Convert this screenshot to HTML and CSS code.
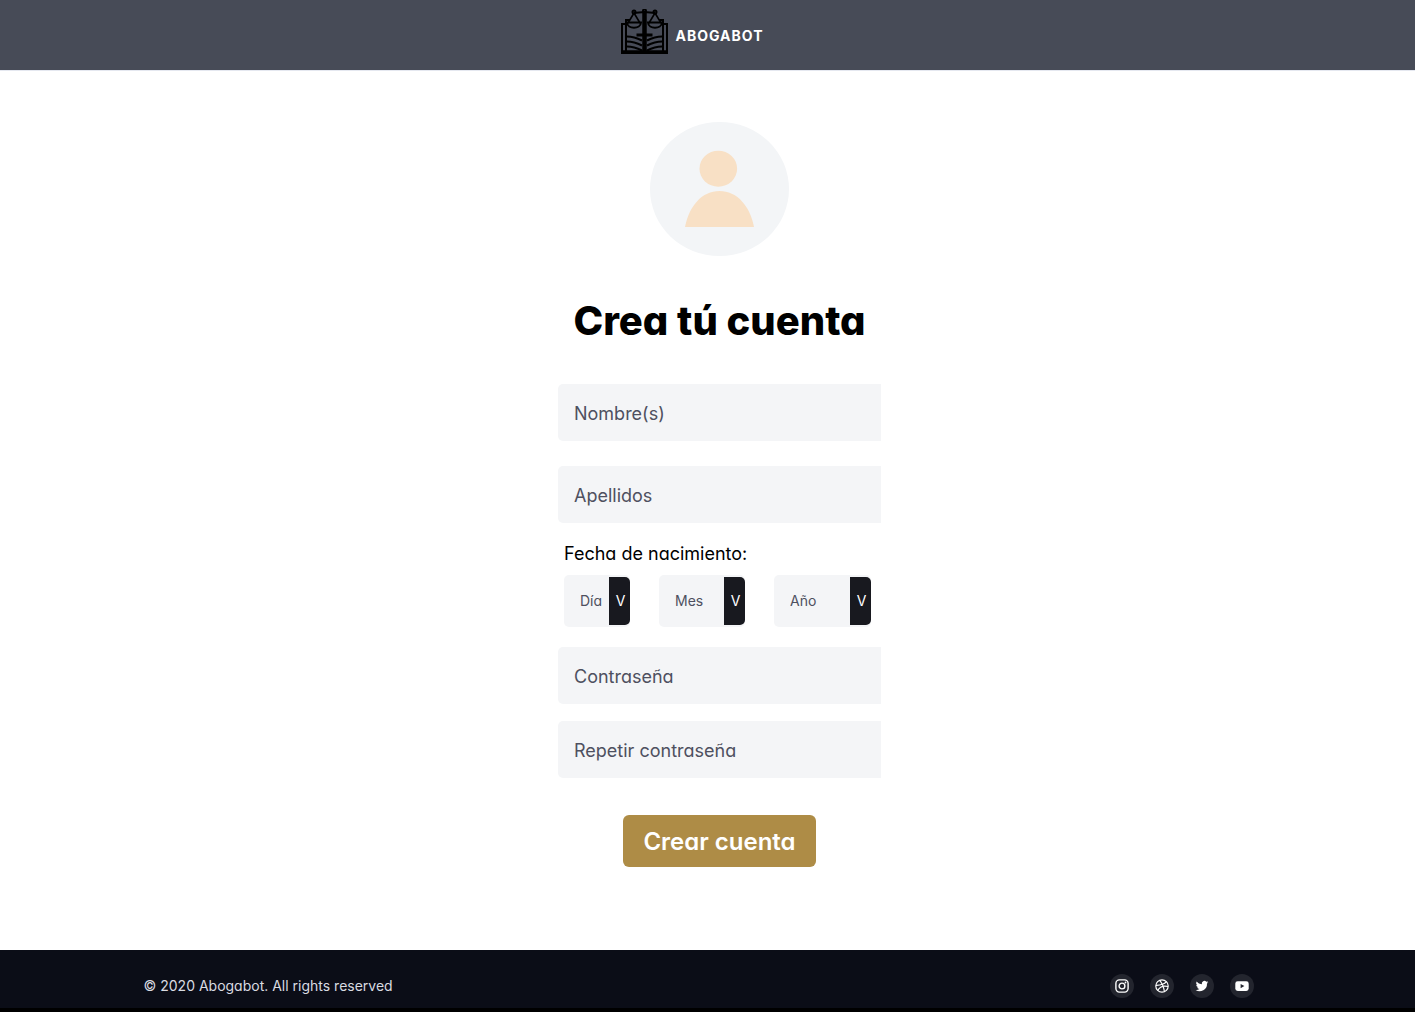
FILE: index.html
```html
<!DOCTYPE html>
<html lang="es">
<head>
<meta charset="utf-8">
<meta name="viewport" content="width=device-width, initial-scale=1">
<title>Abogabot – Crea tú cuenta</title>
<link rel="stylesheet" href="styles.css">
</head>
<body>
<header class="header">
  <a class="brand" href="#">
    <svg class="brand-logo" viewBox="0 0 48 46" aria-hidden="true" fill="none" stroke="#000" stroke-width="2">
      <path d="M5 15H2v29h45V15h-3M6 42V11h4M43 42V11h-4" />
      <path d="M2 43h45" stroke-width="3.500" />
      <path d="M14 4c4 0 6-1 10.500-1S31 4 35 4" />
      <path d="M24.500 3v40" stroke-width="4.500" />
      <path d="M16.500 26h16" stroke-width="3" />
      <path d="M14 4 8 14M14 4l6 10M35 4l-6 10M35 4l6 10" stroke-width="1.600" />
      <path d="M7 13.500h14c-.5 7-13.500 7-14 0zM28 13.500h14c-.5 7-13.500 7-14 0z" />
      <circle cx="14" cy="3" r="1.500" /><circle cx="35" cy="3" r="1.500" /><circle cx="24.500" cy="2" r="1.500" />
      <path d="M7 27.500c6 0 10 1.500 15 4M7 32.500c6 0 10 1.500 15 4M7 37.500c6 0 10 1.500 15 4M42 27.500c-6 0-10 1.500-15 4M42 32.500c-6 0-10 1.500-15 4M42 37.500c-6 0-10 1.500-15 4" />
    </svg>
    <span class="brand-name">ABOGABOT</span>
  </a>
</header>

<main class="main">
  <svg class="avatar" viewBox="0 0 139 134" aria-hidden="true">
    <ellipse cx="69.500" cy="67" rx="69.500" ry="67" fill="#f3f5f7" />
    <ellipse cx="68.300" cy="46.700" rx="18.800" ry="18" fill="#f8e0c5" />
    <path d="M35 105C39 84 52 69 69.500 69S100 84 104 105z" fill="#f8e0c5" />
  </svg>
  <h1 class="title">Crea tú cuenta</h1>
  <form class="form">
    <input class="field" type="text" placeholder="Nombre(s)" aria-label="Nombre(s)">
    <input class="field" type="text" placeholder="Apellidos" aria-label="Apellidos">
    <fieldset class="birth">
      <legend class="birth-label">Fecha de nacimiento:</legend>
      <div class="birth-row">
        <div class="picker picker-day"><select class="picker-select" aria-label="Día"><option>Día</option></select><span class="picker-arrow" aria-hidden="true">V</span></div>
        <div class="picker picker-month"><select class="picker-select" aria-label="Mes"><option>Mes</option></select><span class="picker-arrow" aria-hidden="true">V</span></div>
        <div class="picker picker-year"><select class="picker-select" aria-label="Año"><option>Año</option></select><span class="picker-arrow" aria-hidden="true">V</span></div>
      </div>
    </fieldset>
    <input class="field" type="password" placeholder="Contraseña" aria-label="Contraseña">
    <input class="field" type="password" placeholder="Repetir contraseña" aria-label="Repetir contraseña">
    <button class="submit" type="submit">Crear cuenta</button>
  </form>
</main>

<footer class="footer">
  <div class="footer-inner">
    <p class="copyright">© 2020 Abogabot. All rights reserved</p>
    <nav class="social" aria-label="Redes sociales">
      <a class="social-link" href="#" aria-label="Instagram">
        <svg class="social-icon" viewBox="0 0 16 16" fill="none" stroke="#fff" stroke-width="1.4"><rect x="1.900" y="1.900" width="12.200" height="12.200" rx="3.500" /><circle cx="8" cy="8" r="2.900" /><circle cx="11.500" cy="4.500" r=".9" fill="#fff" stroke="none" /></svg>
      </a>
      <a class="social-link" href="#" aria-label="Dribbble">
        <svg class="social-icon" viewBox="0 0 16 16" fill="none" stroke="#fff" stroke-width="1.200"><circle cx="8" cy="8" r="6.200" /><path d="M5.700 2.300c2.200 2.600 4 6.200 4.700 11.200M1.900 7.300c4.200.1 8-.6 10.500-3.600M3.700 12.500c2-3.700 5.900-5.200 10.400-4" /></svg>
      </a>
      <a class="social-link" href="#" aria-label="Twitter">
        <svg class="social-icon" viewBox="0 0 24 24" fill="#fff"><path d="M21.500 6.200a8 8 0 0 1-2.200.6 3.900 3.900 0 0 0 1.700-2.200 7.800 7.800 0 0 1-2.500 1 3.900 3.900 0 0 0-6.700 3.600 11 11 0 0 1-8-4.100 3.900 3.900 0 0 0 1.200 5.200 3.900 3.900 0 0 1-1.800-.5 3.900 3.900 0 0 0 3.100 3.900 3.900 3.900 0 0 1-1.700.1 3.900 3.900 0 0 0 3.600 2.700 7.900 7.900 0 0 1-5.800 1.600 11.100 11.100 0 0 0 17.100-9.900 8 8 0 0 0 2-2z" /></svg>
      </a>
      <a class="social-link" href="#" aria-label="YouTube">
        <svg class="social-icon" viewBox="0 0 16 16"><rect x="1.300" y="3.300" width="13.400" height="9.600" rx="2.400" fill="#fff" /><path d="M6.600 5.900v4.400L10.400 8.100z" fill="#23252e" /></svg>
      </a>
    </nav>
  </div>
</footer>
</body>
</html>
```
FILE: styles.css
```css
* { box-sizing: border-box; }

body {
  margin: 0;
  min-height: 100vh;
  display: flex;
  flex-direction: column;
  background: #fff;
  color: #000;
  font-family: Inter, "Liberation Sans", sans-serif;
  font-feature-settings: "cv11";
}

input, select, button { font: inherit; font-feature-settings: inherit; }

.header {
  display: flex;
  justify-content: center;
  padding: 9px 32px 15px 0;
  background: #474b57;
  border-bottom: 1px solid #e5e8f0;
}

.brand {
  display: flex;
  align-items: center;
  gap: 8px;
  color: #fff;
  text-decoration: none;
}

.brand-logo { width: 48px; height: 46px; }

.brand-name {
  padding-top: 8px;
  font-size: 14px;
  line-height: 20px;
  font-weight: 700;
  letter-spacing: 1px;
}

.main {
  flex: 1;
  display: flex;
  flex-direction: column;
  align-items: center;
  padding: 51px 0 83px 24px;
}

.avatar { width: 139px; height: 134px; }

.title {
  margin: 41px 0 39px;
  font-size: 40px;
  line-height: 48px;
  font-weight: 800;
}

.form {
  display: flex;
  flex-direction: column;
  width: 323px;
}

.field {
  width: 100%;
  height: 57px;
  padding: 2px 16px 0;
  border: 0;
  border-radius: 5px 0 0 5px;
  background: #f4f5f7;
  color: #4e5060;
  font-size: 18px;
}

.field::placeholder { color: #4e5060; opacity: 1; }

.field + .field { margin-top: 25px; }

.birth {
  margin: 19px 0 20px;
  padding: 0 10px 0 6px;
  border: 0;
}

.birth-label {
  padding: 0;
  font-size: 18px;
  line-height: 24px;
}

.birth-row {
  display: flex;
  justify-content: space-between;
  margin-top: 9px;
}

.picker { position: relative; height: 52px; }
.picker-day { width: 66px; }
.picker-month { width: 86px; }
.picker-year { width: 97px; }

.picker-select {
  appearance: none;
  width: 100%;
  height: 100%;
  padding: 0 0 2px 16px;
  border: 0;
  border-radius: 5px;
  background: #f4f5f7;
  color: #4e5060;
  font-size: 14px;
}

.picker-arrow {
  position: absolute;
  top: 2px;
  right: 0;
  width: 21px;
  height: 48px;
  padding-left: 2px;
  border-radius: 0 5px 5px 0;
  background: #18191f;
  color: #fff;
  font-size: 14px;
  line-height: 48px;
  text-align: center;
  pointer-events: none;
}

.birth ~ .field + .field { margin-top: 17px; }

.submit {
  align-self: center;
  height: 52px;
  margin-top: 37px;
  padding: 0 20px;
  border: 0;
  border-radius: 6px;
  background: #ae8c46;
  color: #fff;
  font-size: 24px;
  font-weight: 600;
  cursor: pointer;
}

.footer {
  padding: 24px 18px 10px 0;
  background: #0b0d17;
  border-bottom: 4px solid #000;
}

.footer-inner {
  display: flex;
  align-items: center;
  justify-content: space-between;
  max-width: 1110px;
  margin: 0 auto;
}

.copyright {
  margin: 0;
  color: #d9dbe1;
  font-size: 14px;
  line-height: 20px;
}

.social { display: flex; gap: 16px; }

.social-link {
  display: grid;
  place-items: center;
  width: 24px;
  height: 24px;
  border-radius: 50%;
  background: #23252e;
}

.social-icon { width: 16px; height: 16px; }
```
